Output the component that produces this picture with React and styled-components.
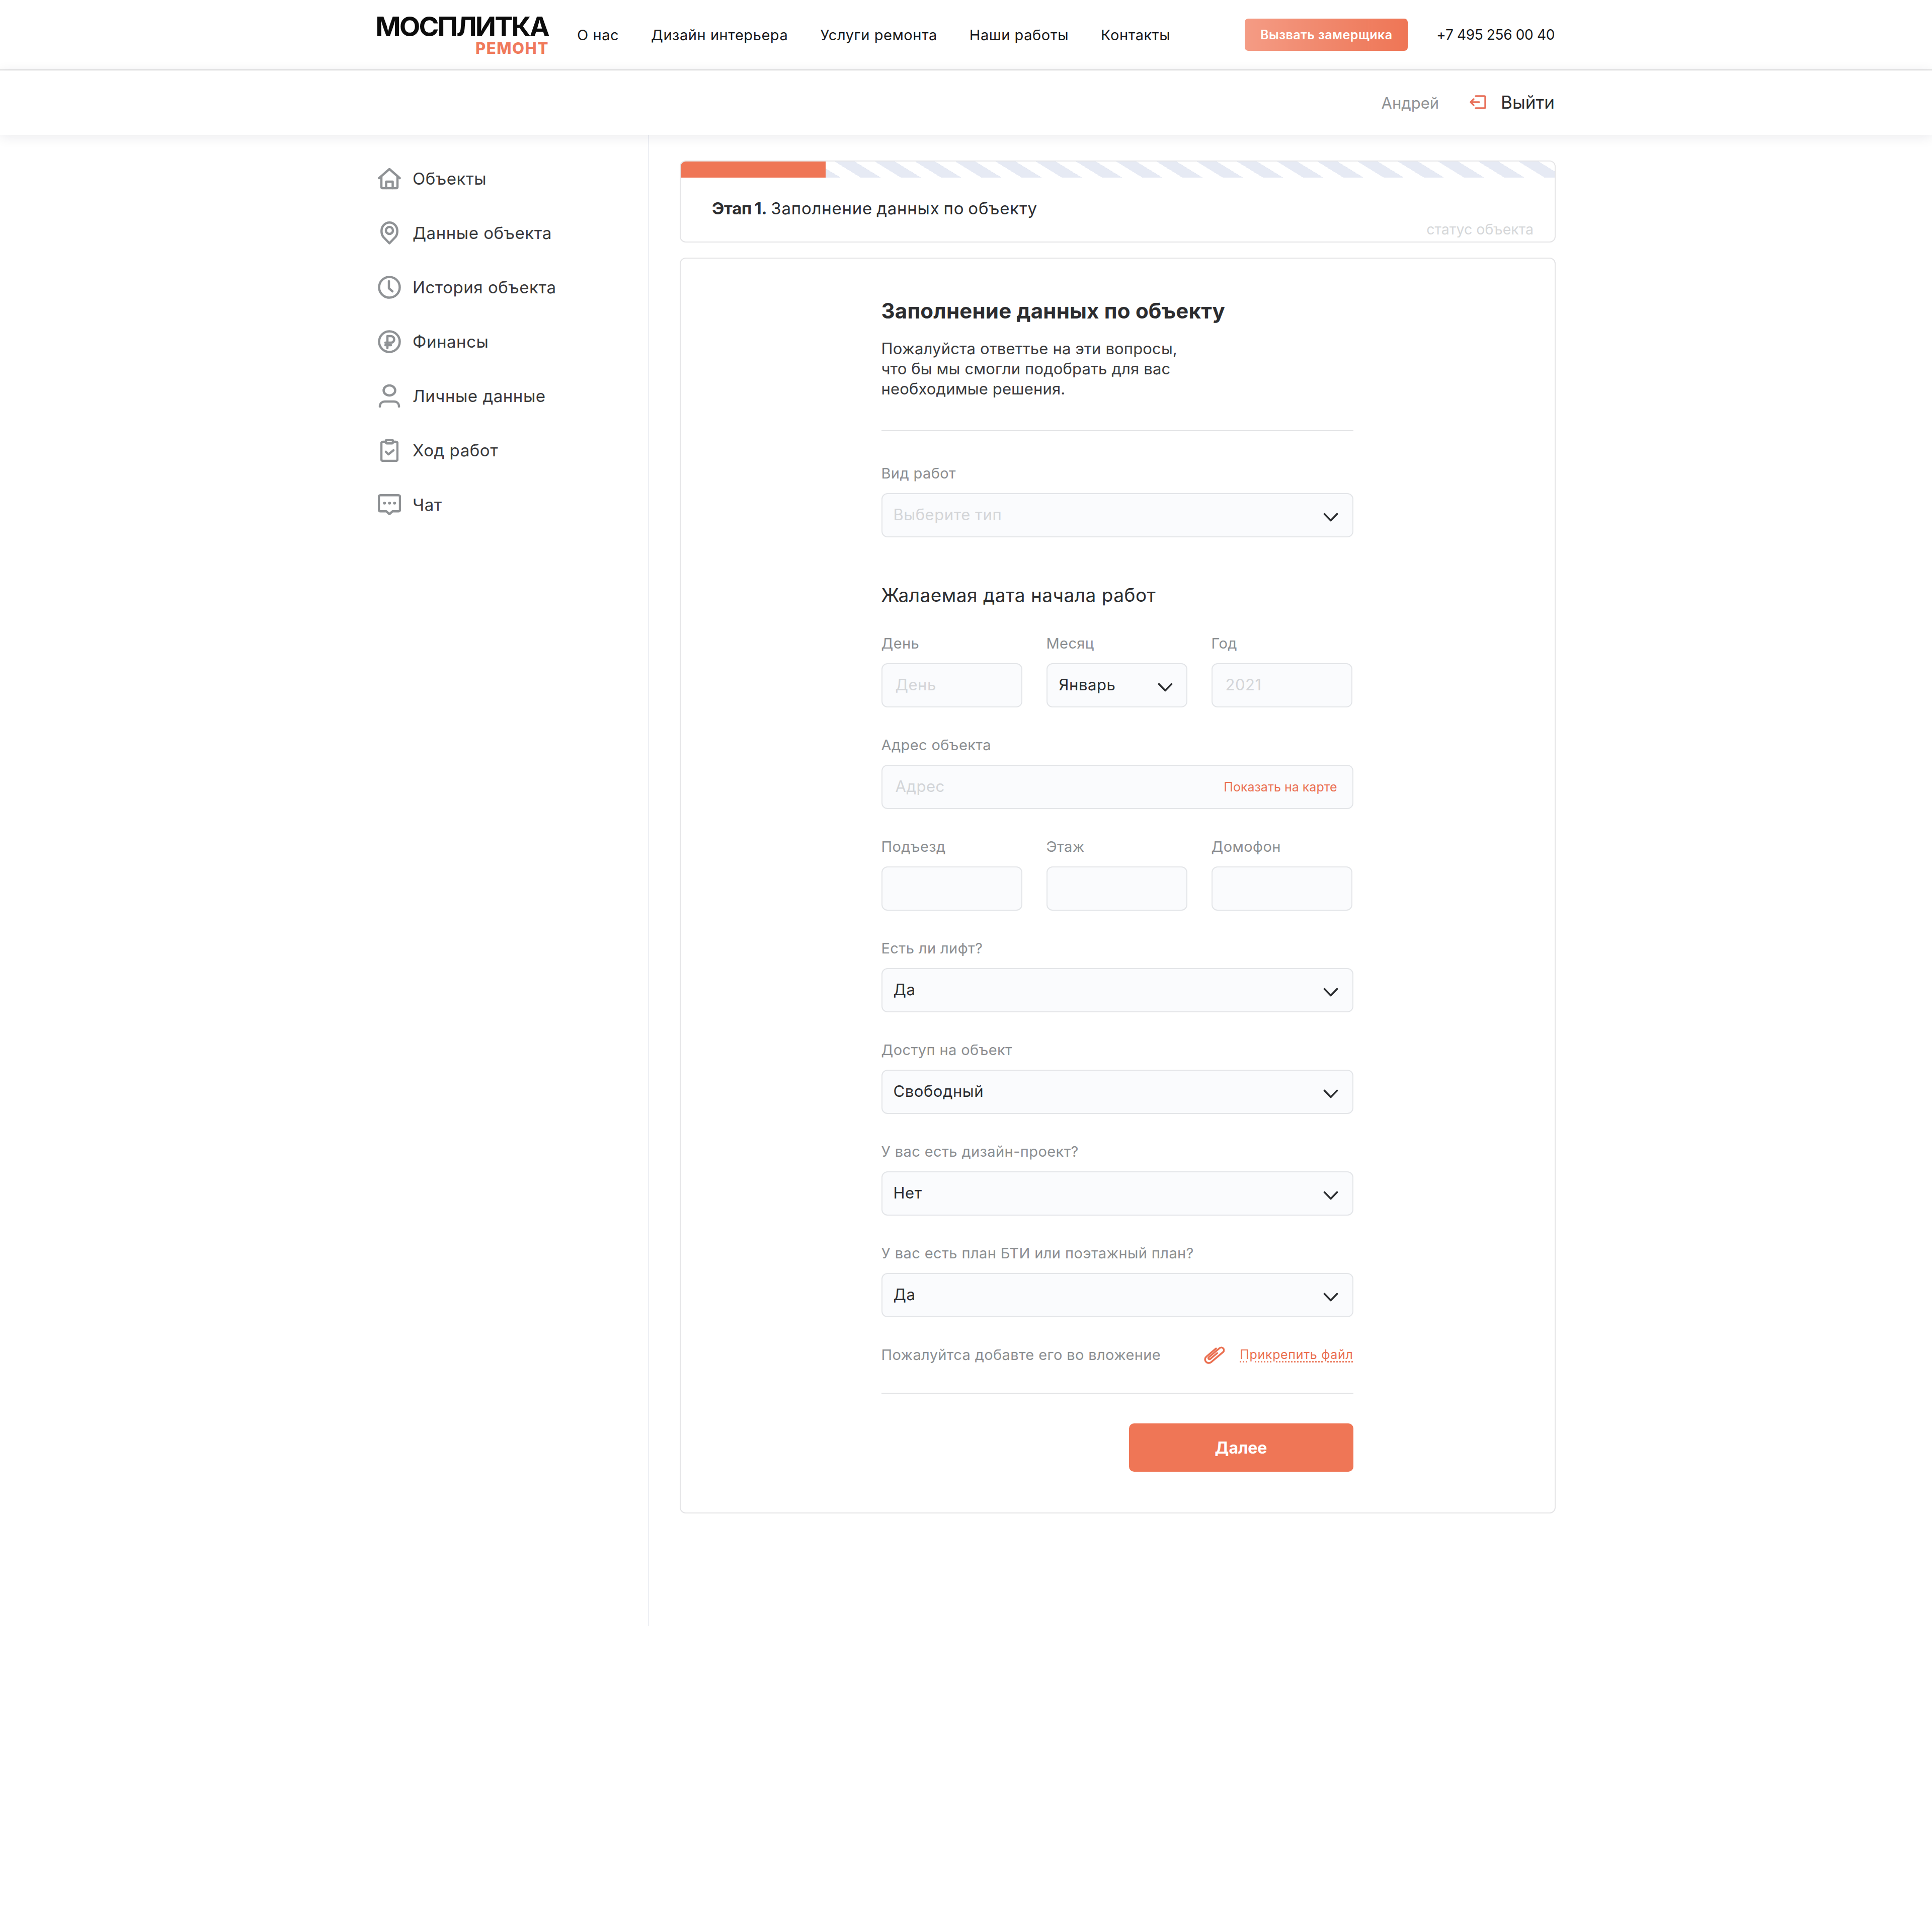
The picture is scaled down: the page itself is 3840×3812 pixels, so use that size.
import React from "react";
import styled, { createGlobalStyle } from "styled-components";

const Global = createGlobalStyle`
  html, body { margin: 0; padding: 0; background: #fff; }
  body { font-family: "Inter", "Noto Sans", sans-serif; color: #2c2d30; min-height: 3812px; }
  * { box-sizing: border-box; }
`;

const Wrap = styled.div`
  width: 2342px;
  margin-left: 750px;
  display: flex;
`;
const TopBar = styled.header`
  height: 140px;
  border-bottom: 2px solid #dcdcdc;
  background: #fff;
`;
const TopRow = styled(Wrap)`
  height: 138px;
  align-items: center;
`;
const Logo = styled.div`
  width: 340px;
  flex: none;
  display: flex;
  flex-direction: column;
  align-items: flex-end;
  padding-top: 2px;
`;
const LogoMain = styled.div`
  font-size: 54px;
  line-height: 46px;
  font-weight: 700;
  color: #0c0c0c;
  letter-spacing: -2.8px;
  white-space: nowrap;
`;
const LogoSub = styled.div`
  font-size: 31px;
  line-height: 28px;
  font-weight: 800;
  color: #f07a5b;
  letter-spacing: 1.6px;
  margin-top: 6px;
  margin-right: -1px;
`;
const Nav = styled.nav`
  display: flex;
  gap: 64px;
  margin-left: 57px;
`;
const NavLink = styled.a`
  font-size: 29px;
  color: #17181a;
  white-space: nowrap;
  letter-spacing: 0.55px;
`;
const CallButton = styled.button`
  margin-left: auto;
  width: 324px;
  height: 64px;
  border: none;
  border-radius: 7px;
  background: linear-gradient(90deg, #f49b84, #ee7555);
  color: #fff;
  font: 600 25px "Inter", sans-serif;
  letter-spacing: 0.5px;
  padding: 0;
`;
const Phone = styled.a`
  margin-left: 57px;
  font-size: 28px;
  color: #17181a;
  white-space: nowrap;
  margin-right: 2px;
  letter-spacing: -0.35px;
`;
const UserBar = styled.div`
  height: 128px;
  background: #fff;
  box-shadow: 0 4px 24px rgba(20, 25, 50, 0.09);
  position: relative;
`;
const UserRow = styled(Wrap)`
  height: 128px;
  align-items: center;
  justify-content: flex-end;
  padding-right: 2px;
`;
const UserName = styled.span`
  font-size: 31px;
  color: #8f9295;
`;
const Logout = styled.a`
  display: flex;
  align-items: center;
  margin-left: 60px;
  gap: 29px;
  font-size: 35px;
  line-height: 40px;
  margin-top: -2px;
  color: #2c2d30;
`;
const Body = styled(Wrap)`
  align-items: flex-start;
`;
const Sidebar = styled.aside`
  width: 540px;
  height: 2964px;
  border-right: 2px solid #eef0f4;
  padding-top: 33px;
  flex: none;
`;
const SideItem = styled.a`
  display: flex;
  align-items: center;
  height: 108px;
  font-size: 33px;
  color: #38393c;
  letter-spacing: 0.55px;
`;
const SideIcon = styled.span`
  width: 48px;
  height: 48px;
  display: flex;
  align-items: center;
  justify-content: center;
  margin-right: 22px;
  flex: none;
`;
const Main = styled.main`
  flex: 1;
  padding: 51px 0 0 61px;
`;
const Card = styled.section`
  border: 2px solid #e4e4e6;
  border-radius: 12px;
  background: #fff;
  overflow: hidden;
`;
const StageCard = styled(Card)`
  height: 163px;
`;
const Progress = styled.div`
  height: 32px;
  background: repeating-linear-gradient(
    31.6deg,
    #fff 0 19.9px,
    #e6eaf4 19.9px 40.8px,
    #fff 40.8px 41.9px
  );
`;
const ProgressFill = styled.div`
  height: 100%;
  width: ${(p) => p.$value}px;
  background: #ef7656;
`;
const StageBody = styled.div`
  display: flex;
  justify-content: space-between;
  padding: 39px 42px 0 62px;
`;
const StageTitle = styled.div`
  font-size: 33px;
  line-height: 44px;
  color: #2c2d30;
  letter-spacing: 0.78px;
  word-spacing: -2px;
  b { font-weight: 700; letter-spacing: -0.3px; }
`;
const StageStatus = styled.div`
  font-size: 28.5px;
  line-height: 36px;
  color: #d5d7d9;
  margin-top: 46px;
`;
const FormCard = styled(Card)`
  margin-top: 30px;
  padding: 80px 0 81px;
  display: flex;
  justify-content: center;
`;
const Form = styled.div`
  width: 938px;
  margin-right: 2px;
`;
const Title = styled.h1`
  margin: 0;
  font-size: 42px;
  line-height: 48px;
  font-weight: 700;
  color: #2c2d30;
  letter-spacing: 0.2px;
`;
const Lead = styled.p`
  margin: 31px 0 0;
  font-size: 31px;
  line-height: 40px;
  color: #3a3b3e;
  letter-spacing: 0.15px;
`;
const Rule = styled.div`
  height: 2px;
  background: #e2e3e5;
  margin-top: ${(p) => p.$top}px;
`;
const SubTitle = styled.h2`
  margin: 91px 0 51px;
  font-size: 37px;
  line-height: 48px;
  font-weight: 400;
  color: #2c2d30;
  letter-spacing: 0.5px;
`;
const FieldWrap = styled.div`
  margin-bottom: ${(p) => (p.$flush ? 0 : 54)}px;
  margin-top: ${(p) => (p.$first ? 63 : 0)}px;
  min-width: 0;
`;
const Label = styled.div`
  font-size: 29px;
  line-height: 42px;
  height: 40px;
  color: #8b8e91;
  margin-bottom: 20px;
  white-space: nowrap;
  letter-spacing: 0.4px;
`;
const Box = styled.div`
  height: 88px;
  border: 2px solid #e3e5e8;
  border-radius: 12px;
  background: #fafbfd;
  display: flex;
  align-items: center;
  justify-content: space-between;
  padding: ${(p) =>
    p.$small ? (p.$select ? "0 27px 0 23px" : "0 24px 0 26px") : "0 28px 0 22px"};
  font-size: 31px;
  color: #2c2d30;
`;
const Value = styled.span`
  color: ${(p) => (p.$placeholder ? "#d3d5d8" : "#2c2d30")};
  margin-top: -4px;
  letter-spacing: 0.55px;
`;
const MapLink = styled.a`
  font-size: 25px;
  color: #ea6f50;
  margin-right: 6px;
`;
const Triple = styled.div`
  display: grid;
  grid-template-columns: 280px 280px 280px;
  column-gap: 48px;
`;
const Attach = styled.div`
  display: flex;
  align-items: center;
  height: 40px;
  font-size: 29px;
  color: #8b8e91;
  letter-spacing: 0.37px;
`;
const ClipLink = styled.a`
  margin-left: auto;
  display: flex;
  align-items: center;
  gap: 30px;
`;
const FileLink = styled.span`
  font-size: 25px;
  color: #ea6f50;
  text-decoration: underline dotted;
  text-underline-offset: 4px;
  letter-spacing: 0.66px;
`;
const Actions = styled.div`
  display: flex;
  justify-content: flex-end;
  margin-top: 59px;
`;
const NextButton = styled.button`
  width: 446px;
  height: 96px;
  border: none;
  border-radius: 10px;
  background: #ef7656;
  color: #fff;
  font: 700 32px "Inter", sans-serif;
`;
const SelectArrow = styled.svg`
  margin-top: 8px;
  flex: none;
`;

const G = { fill: "none", stroke: "#8f9295", strokeWidth: 4.5, strokeLinecap: "round", strokeLinejoin: "round" };

const icons = {
  home: (
    <svg width="46" height="44" viewBox="0 0 46 44" {...G}>
      <path d="M2.5 21 23 3l20.5 18" />
      <path d="M7 19v20a2 2 0 0 0 2 2h28a2 2 0 0 0 2-2V19" />
      <path d="M16.5 41V28h13v13" />
    </svg>
  ),
  pin: (
    <svg width="36" height="46" viewBox="0 0 36 46" {...G}>
      <path d="M18 43.5 6 31C3 27.5 2.3 23 2.3 19 2.3 10 9 2.3 18 2.3S33.7 10 33.7 19c0 4-.7 8.5-3.700 12Z" />
      <circle cx="18" cy="18" r="7" />
    </svg>
  ),
  clock: (
    <svg width="46" height="46" viewBox="0 0 46 46" {...G}>
      <circle cx="23" cy="23" r="20.5" />
      <path d="M22 11v14l7 6" />
    </svg>
  ),
  ruble: (
    <svg width="46" height="46" viewBox="0 0 46 46" {...G}>
      <circle cx="23" cy="23" r="20.5" />
      <path d="M19 36V12h7a6.5 6.5 0 0 1 0 13h-11M15 30h11" />
    </svg>
  ),
  user: (
    <svg width="44" height="46" viewBox="0 0 44 46" {...G}>
      <ellipse cx="22" cy="12" rx="11.5" ry="10" />
      <path d="M3 44c0-6 4-10 10-10h18c6 0 10 4 10 10" />
    </svg>
  ),
  clipboard: (
    <svg width="36" height="46" viewBox="0 0 36 46" {...G}>
      <path d="M11 6H5a3 3 0 0 0-3 3v32a3 3 0 0 0 3 3h26a3 3 0 0 0 3-3V9a3 3 0 0 0-3-3h-6" />
      <rect x="11" y="2.3" width="14" height="7" rx="2" />
      <path d="m11 26 5 5 10-8" />
    </svg>
  ),
  chat: (
    <svg width="46" height="42" viewBox="0 0 46 42" {...G}>
      <path d="M5 2.3h36a3 3 0 0 1 3 3v26a3 3 0 0 1-3 3H29l-6 5.5-6-5.5H5a3 3 0 0 1-3-3v-26a3 3 0 0 1 3-3Z" />
      <path d="M13 18h.5M23 18h.5M33 18h.5" strokeWidth="5.5" />
    </svg>
  ),
};

const Chevron = () => (
  <SelectArrow width="30" height="18" viewBox="0 0 30 18" fill="none" stroke="#2b2d30" strokeWidth="3.6" strokeLinecap="round" strokeLinejoin="round">
    <path d="M2.5 2.5 15 15.5 27.5 2.5" />
  </SelectArrow>
);

const ExitIcon = () => (
  <svg width="34" height="28" viewBox="0 0 34 28" fill="none" stroke="#e8705a" strokeWidth="3.4" strokeLinecap="round" strokeLinejoin="round">
    <path d="M13 2h17a2 2 0 0 1 2 2v20a2 2 0 0 1-2 2H13" />
    <path d="M20 14H3M9 8l-6 6 6 6" />
  </svg>
);

const ClipIcon = () => (
  <svg width="41" height="37" viewBox="0 0 41 37" fill="none" stroke="#ea6f50" strokeWidth="3.5" strokeLinecap="round" strokeLinejoin="round">
    <path transform="rotate(50 20.5 18.5)" d="M13.25 8V33a7.25 7.25 0 0 0 14.5 0V2a5.25 5.25 0 0 0-10.5 0V30a2.25 2.25 0 0 0 4.5 0V12" />
  </svg>
);

const Field = ({ label, value, placeholder, select, small, children }) => (
  <FieldWrap>
    <Label>{label}</Label>
    <Box $small={small} $select={select}>
      <Value $placeholder={placeholder}>{value}</Value>
      {select && <Chevron />}
      {children}
    </Box>
  </FieldWrap>
);

const menu = [
  ["home", "Объекты"],
  ["pin", "Данные объекта"],
  ["clock", "История объекта"],
  ["ruble", "Финансы"],
  ["user", "Личные данные"],
  ["clipboard", "Ход работ"],
  ["chat", "Чат"],
];

export default function App() {
  return (
    <>
      <Global />
      <TopBar>
        <TopRow>
          <Logo>
            <LogoMain>МОСПЛИТКА</LogoMain>
            <LogoSub>РЕМОНТ</LogoSub>
          </Logo>
          <Nav>
            {["О нас", "Дизайн интерьера", "Услуги ремонта", "Наши работы", "Контакты"].map((t) => (
              <NavLink key={t}>{t}</NavLink>
            ))}
          </Nav>
          <CallButton>Вызвать замерщика</CallButton>
          <Phone>+7 495 256 00 40</Phone>
        </TopRow>
      </TopBar>
      <UserBar>
        <UserRow>
          <UserName>Андрей</UserName>
          <Logout>
            <ExitIcon />
            Выйти
          </Logout>
        </UserRow>
      </UserBar>
      <Body>
        <Sidebar>
          {menu.map(([icon, text]) => (
            <SideItem key={text}>
              <SideIcon>{icons[icon]}</SideIcon>
              {text}
            </SideItem>
          ))}
        </Sidebar>
        <Main>
          <StageCard>
            <Progress>
              <ProgressFill $value={288} />
            </Progress>
            <StageBody>
              <StageTitle>
                <b>Этап 1.</b> Заполнение данных по объекту
              </StageTitle>
              <StageStatus>статус объекта</StageStatus>
            </StageBody>
          </StageCard>
          <FormCard>
            <Form>
              <Title>Заполнение данных по объекту</Title>
              <Lead>
                Пожалуйста ответтье на эти вопросы,
                <br />
                что бы мы смогли подобрать для вас
                <br />
                необходимые решения.
              </Lead>
              <Rule $top={62} />
              <FieldWrap $first $flush>
                <Label>Вид работ</Label>
                <Box>
                  <Value $placeholder>Выберите тип</Value>
                  <Chevron />
                </Box>
              </FieldWrap>
              <SubTitle>Жалаемая дата начала работ</SubTitle>
              <Triple>
                <Field small label="День" value="День" placeholder />
                <Field small label="Месяц" value="Январь" select />
                <Field small label="Год" value="2021" placeholder />
              </Triple>
              <Field label="Адрес объекта" value="Адрес" placeholder small>
                <MapLink>Показать на карте</MapLink>
              </Field>
              <Triple>
                <Field small label="Подъезд" />
                <Field small label="Этаж" />
                <Field small label="Домофон" />
              </Triple>
              <Field label="Есть ли лифт?" value="Да" select />
              <Field label="Доступ на объект" value="Свободный" select />
              <Field label="У вас есть дизайн-проект?" value="Нет" select />
              <Field label="У вас есть план БТИ или поэтажный план?" value="Да" select />
              <Attach>
                Пожалуйтса добавте его во вложение
                <ClipLink>
                  <ClipIcon />
                  <FileLink>Прикрепить файл</FileLink>
                </ClipLink>
              </Attach>
              <Rule $top={56} />
              <Actions>
                <NextButton>Далее</NextButton>
              </Actions>
            </Form>
          </FormCard>
        </Main>
      </Body>
    </>
  );
}
